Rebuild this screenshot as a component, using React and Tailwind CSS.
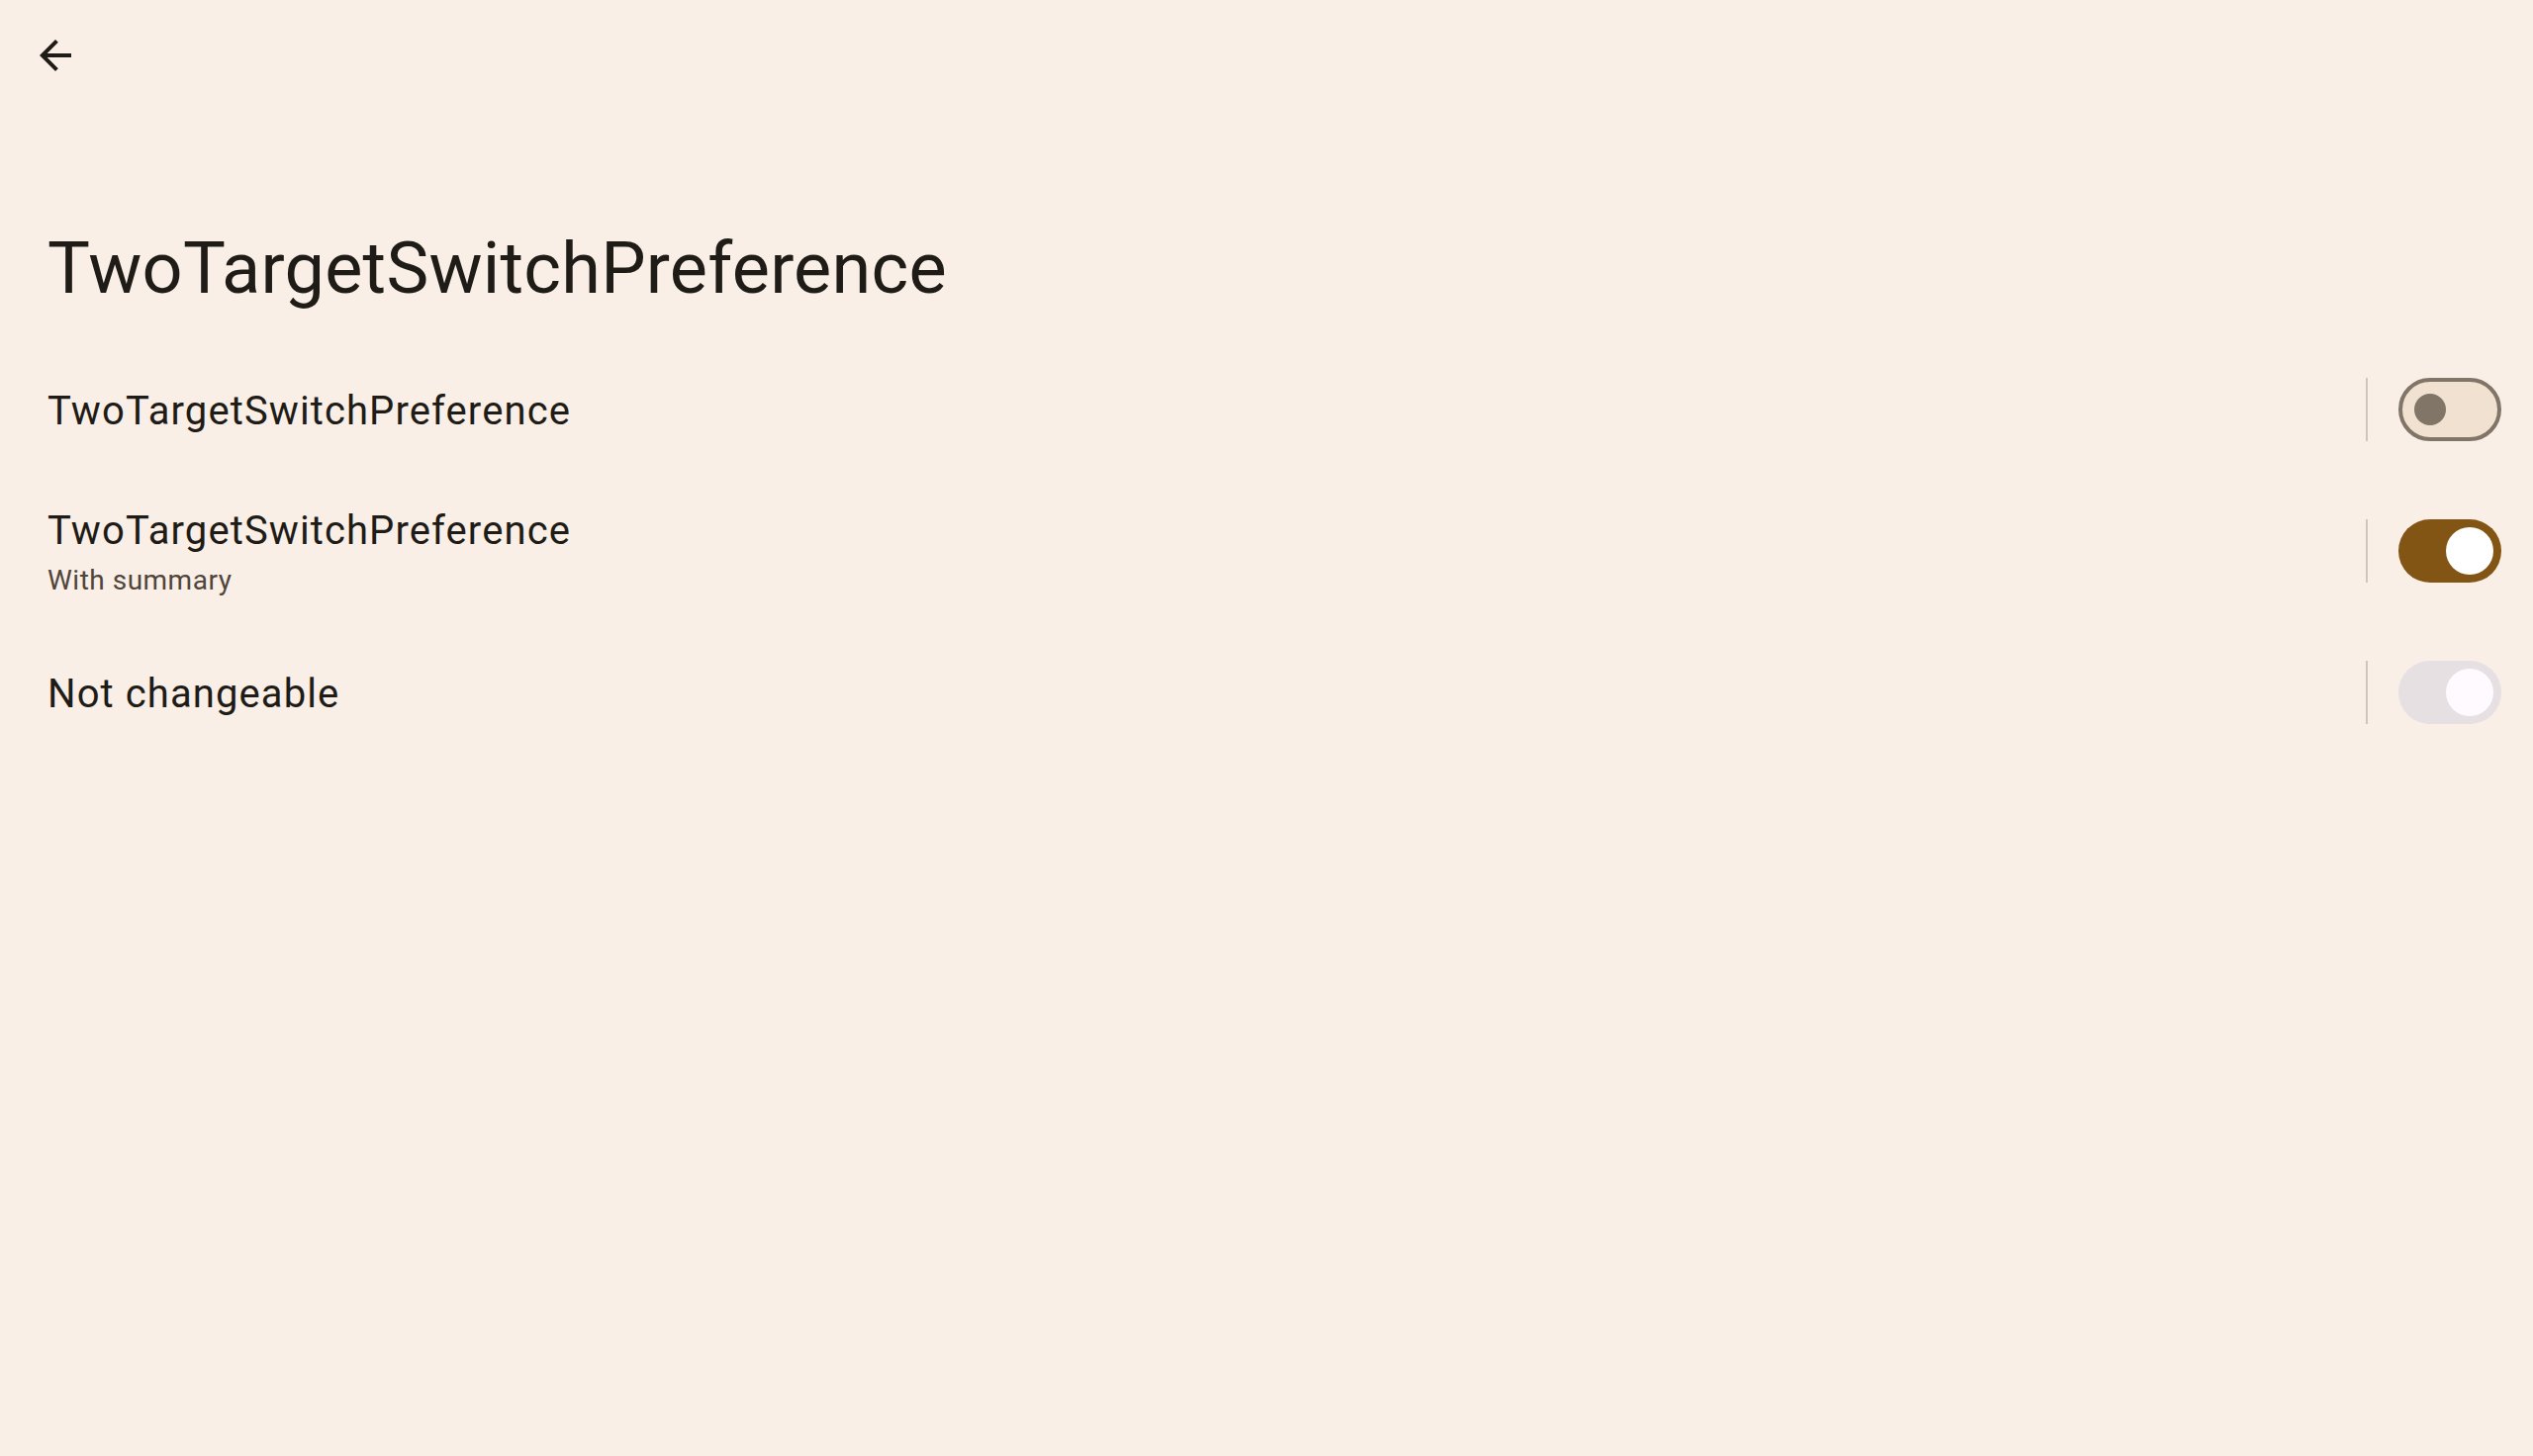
import React from 'react';

const font = { fontFamily: 'Roboto, "Noto Sans", sans-serif' };

const BackArrow = () => (
  <svg width="48" height="48" viewBox="0 0 24 24" className="text-[#1f1b16]">
    <path fill="currentColor" d="M20 11H7.83l5.59-5.59L12 4l-8 8 8 8 1.41-1.41L7.83 13H20v-2z" />
  </svg>
);

const Switch = ({ checked, disabled }) => {
  if (disabled) {
    return (
      <div className="flex h-[64px] w-[104px] items-center justify-end rounded-full bg-[#e6e0e3] pr-[8px]">
        <div className="h-[48px] w-[48px] rounded-full bg-[#fefaff]" />
      </div>
    );
  }
  if (checked) {
    return (
      <div className="flex h-[64px] w-[104px] items-center justify-end rounded-full bg-[#825514] pr-[8px]">
        <div className="h-[48px] w-[48px] rounded-full bg-white" />
      </div>
    );
  }
  return (
    <div className="flex h-[64px] w-[104px] items-center rounded-full border-4 border-[#807567] bg-[#f1e1d1] pl-[12px]">
      <div className="h-[32px] w-[32px] rounded-full bg-[#807567]" />
    </div>
  );
};

const PrefRow = ({ title, summary, checked, disabled, height }) => (
  <div className={`flex items-center pl-[48px] pr-[32px] ${height}`}>
    <div className="flex flex-1 flex-col pt-[3px]">
      <div className="text-[40px] leading-[52px] tracking-[1.1px] text-[#1f1b16]">{title}</div>
      {summary && (
        <div className="mt-[6px] text-[28px] leading-[36px] tracking-[0.5px] text-[#50453a]">{summary}</div>
      )}
    </div>
    <div className="flex items-center gap-[31px]">
      <div className="h-[64px] w-[2px] bg-[#d0c5bb]" />
      <Switch checked={checked} disabled={disabled} />
    </div>
  </div>
);

export default function App() {
  return (
    <div className="min-h-[1472px] w-full bg-[#f9efe7]" style={font}>
      {/* Top bar */}
      <div className="flex h-[112px] items-start pl-[32px] pt-[32px]">
        <BackArrow />
      </div>

      {/* Large title */}
      <div className="mt-[116px] pl-[48px] text-[72px] leading-[88px] tracking-[0.25px] text-[#1f1b16]">
        TwoTargetSwitchPreference
      </div>

      {/* Preferences */}
      <div className="mt-[26px] flex flex-col">
        <PrefRow title="TwoTargetSwitchPreference" height="h-[144px]" />
        <PrefRow title="TwoTargetSwitchPreference" summary="With summary" checked height="h-[141px]" />
        <PrefRow title="Not changeable" checked disabled height="h-[146px]" />
      </div>
    </div>
  );
}
